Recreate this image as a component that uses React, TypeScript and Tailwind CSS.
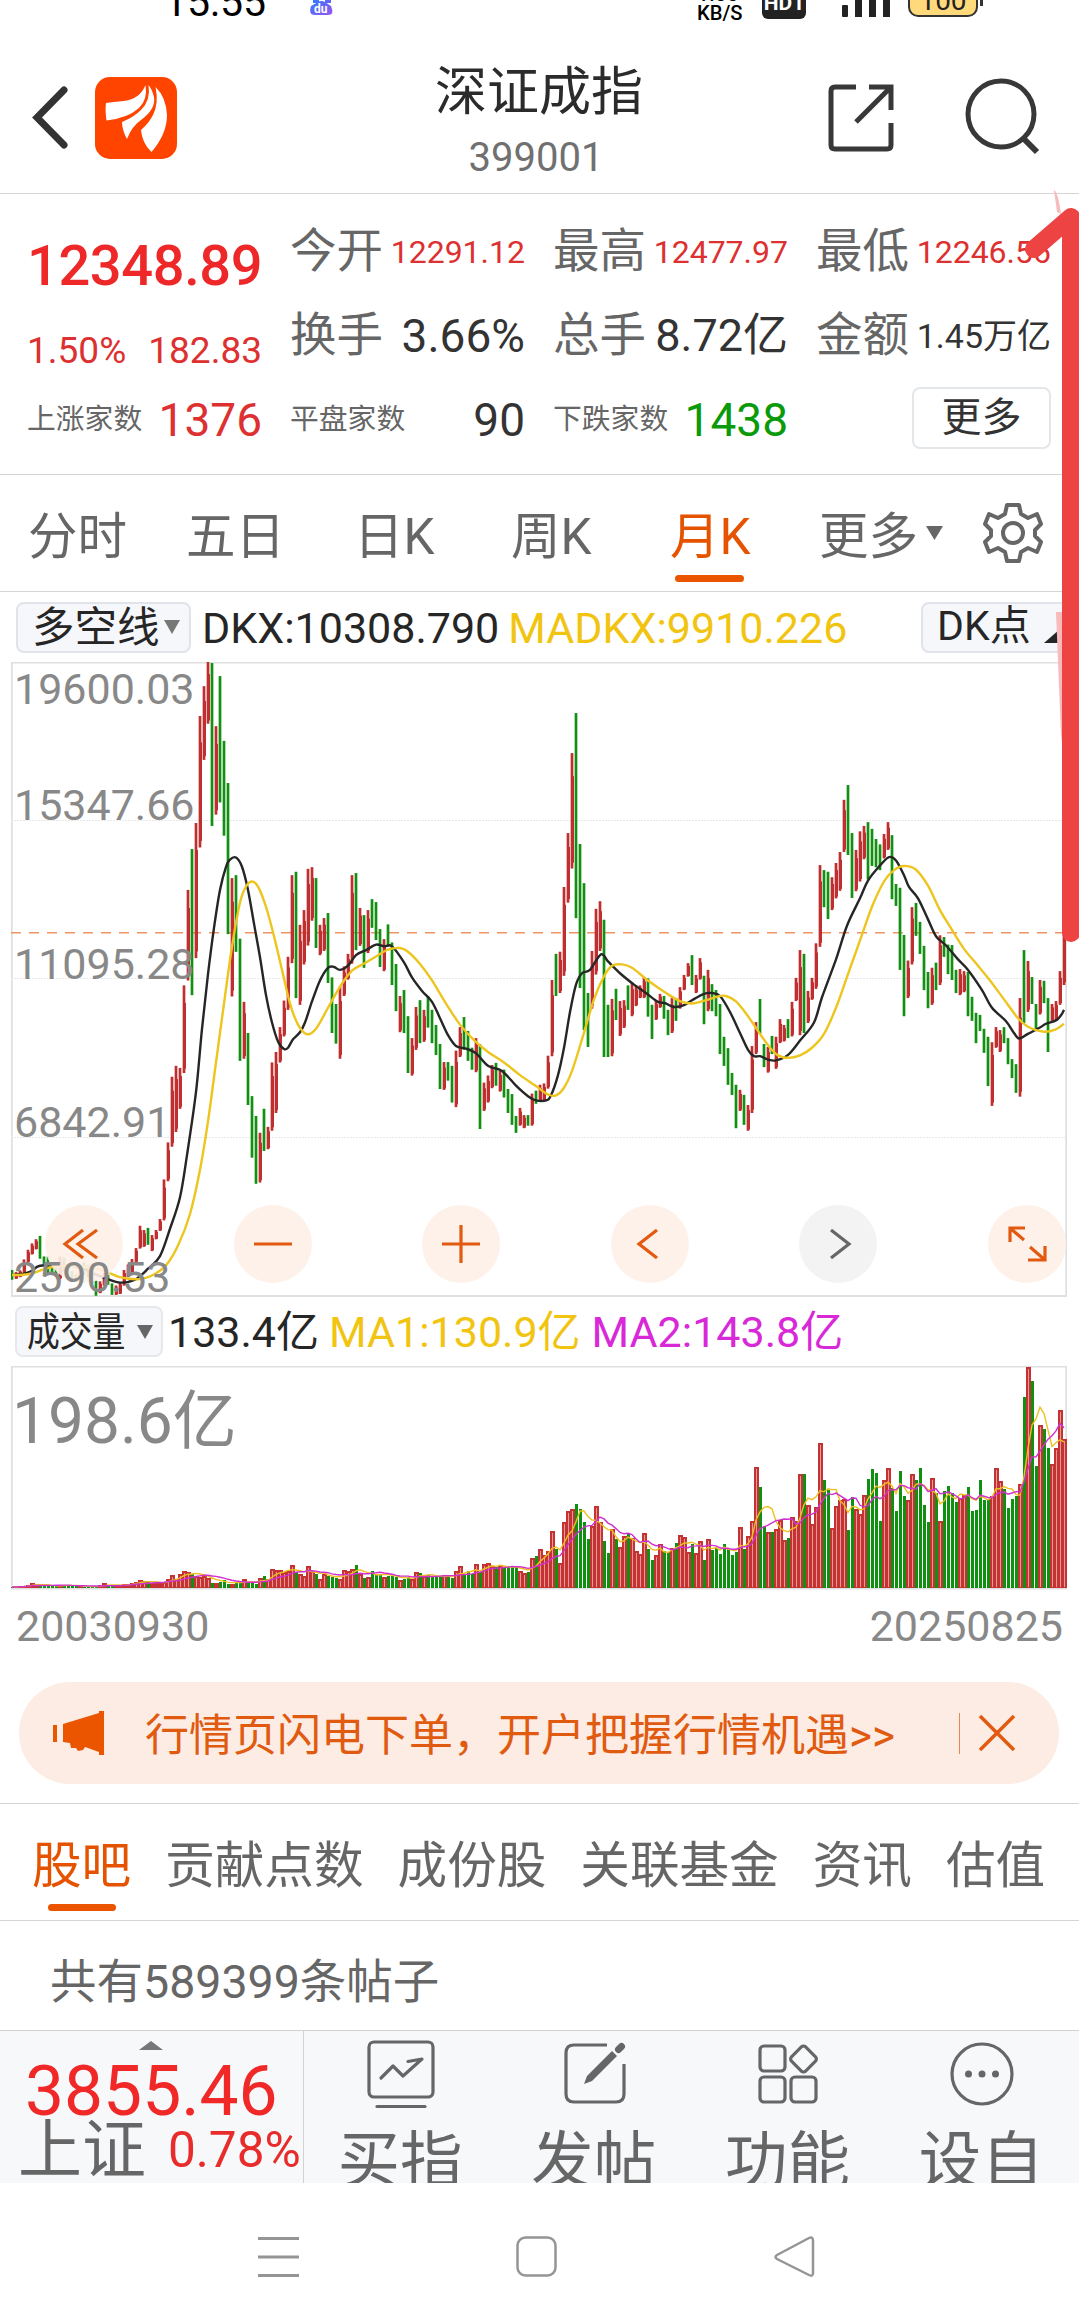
import React from 'react';
import clsx from 'clsx';

type Point = [number, number];

// Monthly candles: direction, then high / low as a distance from the top of the panel (0 - 1534 scale)
const CANDLES = `
g1473-1496 r1478-1494 r1474-1490 r1448-1482 r1425-1455 r1410-1436 r1400-1424 g1392-1446 g1441-1462 g1441-1480
g1460-1485 g1462-1488 r1441-1495 g1444-1478 g1465-1490 g1476-1494 g1484-1500 r1466-1500 g1455-1484 g1462-1490
g1475-1503 g1498-1534 r1500-1528 r1480-1510 g1485-1508 g1505-1532 r1510-1532 r1502-1530 r1473-1510 r1460-1490
r1447-1482 r1421-1455 r1368-1422 r1378-1418 g1373-1413 r1390-1428 r1378-1400 r1352-1380 r1258-1355 r1170-1262
r1014-1180 r988-1145 r993-1090 r797-1005 r570-785 g473-820 r411-732 r157-469 r86-261 r28-175
g31-418 r181-391 g62-362 g216-441 g316-675 r542-823 g535-717 g686-976 r836-971 g910-1081
g1060-1206 g1107-1268 r1147-1265 g1090-1190 r1133-1186 r980-1142 r955-1100 r896-980 r833-918 r729-855
r535-744 g527-827 r653-843 r618-747 r520-702 r516-643 g542-708 r653-725 r637-715 g625-791
g778-910 g841-935 r800-971 r752-822 r722-783 r535-745 g530-713 r613-703 g630-755 r618-720
g592-660 g599-689 g663-753 r687-763 g652-705 g695-796 g746-858 r822-908 g808-910 g870-1005
r922-1011 r848-950 g832-934 r855-931 g822-897 g855-934 g891-962 g936-1043 r979-1045 g979-1023
g988-1075 r952-1086 r896-967 g872-950 g905-976 g945-997 r922-1003 g937-1138 r1028-1095 r1011-1075
r986-1041 g981-1035 r1000-1049 g997-1063 g1043-1100 g1055-1128 g1107-1147 r1088-1130 r1105-1136 g1105-1130
r1054-1130 g1047-1078 r1033-1073 r1030-1073 r964-1042 r784-965 g722-822 r717-815 r563-774 r435-600
r245-519 g150-637 g461-803 g554-903 g815-943 r715-852 r615-771 r597-715 g641-967 g843-967
r829-965 g805-879 r834-917 r832-898 g797-855 r790-870 r797-846 r797-827 r778-827 g780-871
g843-924 r832-879 r817-850 g822-876 g855-915 r827-910 g827-881 r801-852 r772-808 r744-776
g725-796 r772-815 r732-783 g774-889 r760-858 g794-858 g808-870 g841-960 g919-988 g946-1033
g1005-1057 g1033-1136 r1045-1095 g1057-1128 r1081-1142 r941-1100 r884-960 g829-912 g936-991 r943-1004
g917-960 r919-995 r877-934 r891-930 g877-922 r836-918 r779-834 r713-915 g722-910 r810-886
r779-831 r697-805 r511-705 g523-611 g527-639 r540-618 r506-590 r480-572 r356-480 g321-487
g435-589 r475-573 r431-550 r418-497 g409-545 g425-513 g449-516 g462-523 r437-495 r409-475
g440-592 g556-608 g565-760 g677-870 r738-827 r611-747 g601-679 g646-722 g703-808 g765-851
r755-843 g743-808 r678-796 g682-729 g700-770 g701-784 g760-815 r758-820 r763-813 g765-870
g824-881 g862-934 g867-905 g900-957 g919-1036 r932-1083 r896-945 r903-955 g896-934 g922-984
g972-1017 g984-1052 r827-1061 g713-886 r739-860 g777-841 g841-900 r784-866 g786-839 g827-955
r841-881 r834-881 r763-843 r660-796`
  .trim()
  .split(/\s+/)
  .map((s) => {
    const [high, low] = s.slice(1).split('-').map(Number);
    return { up: s[0] === 'r', high, low };
  });

const VOLUMES = `
1 1 2 2 3 5 4 3 2 2 2 2 3 3 3 2 2 2 1 1 1 2 3 5 3 2 2 3 4 4 5 6 8 7 6 5 5 5 6 9
13 9 14 17 16 14 12 11 12 10 5 5 6 8 4 4 5 6 9 6 5 4 10 12 9 19 18 18 16 17
23 16 14 12 22 17 14 9 14 12 11 10 9 18 17 19 23 14 10 11 17 14 14 11 12 12 11 8 9 11
9 16 15 12 13 11 11 12 13 11 10 17 22 14 17 14 24 16 24 25 22 21 22 20 21 21 21 17 15 16
30 32 39 33 37 57 39 25 66 77 79 84 79 66 49 62 82 66 47 35 59 49 41 52 54 50 37 34 55 39
28 33 44 37 36 40 45 53 51 36 44 35 47 28 49 38 40 34 44 39 33 36 61 39 52 67 121 101 62 56
56 59 68 48 50 71 67 114 114 83 64 81 145 108 98 60 82 88 89 58 91 79 74 93 109 119 115 67 108 120
100 77 117 92 88 114 108 120 83 66 110 95 67 97 102 95 86 90 93 101 77 78 108 88 89 92 120 107 99 80
89 92 104 191 221 207 122 163 159 140 124 140 178 149`
  .trim()
  .split(/\s+/)
  .map(Number);

const DKX: Point[] = [
  [12, 1485], [24, 1482], [32, 1475], [40, 1463], [64, 1462], [84, 1470], [92, 1480], [107, 1494], [120, 1503],
  [135, 1496], [148, 1470], [160, 1440], [170, 1375], [180, 1300], [187, 1200], [196, 1050], [202, 900], [208, 770],
  [214, 660], [220, 570], [226, 515], [230, 498], [236, 493], [242, 515], [248, 570], [254, 650], [260, 730],
  [266, 820], [272, 885], [278, 930], [284, 948], [288, 945], [293, 925], [300, 908], [305, 885], [312, 835],
  [320, 785], [328, 755], [334, 753], [340, 760], [348, 750], [356, 725], [366, 713], [376, 700], [384, 704],
  [392, 704], [404, 742], [412, 778], [422, 810], [432, 836], [440, 875], [448, 915], [456, 941], [466, 947],
  [476, 958], [488, 988], [502, 1000], [516, 1035], [528, 1060], [536, 1070], [546, 1070], [551, 1058], [558, 1010],
  [564, 945], [570, 860], [576, 795], [582, 768], [590, 760], [601, 723], [608, 740], [620, 768], [634, 795],
  [646, 815], [658, 836], [665, 839], [674, 848], [684, 844], [692, 832], [704, 817], [712, 815], [720, 822],
  [730, 860], [740, 910], [748, 950], [754, 965], [760, 965], [768, 973], [776, 975], [788, 962], [800, 928],
  [814, 885], [822, 825], [836, 735], [847, 655], [860, 590], [868, 548], [880, 512], [889, 492], [896, 500],
  [904, 535], [909, 563], [918, 590], [928, 640], [936, 680], [946, 702], [958, 735], [968, 760], [982, 808],
  [992, 850], [1006, 882], [1014, 910], [1019, 923], [1028, 912], [1040, 897], [1046, 888], [1056, 880], [1061, 868],
  [1064, 855],
];

const MADKX: Point[] = [
  [12, 1485], [28, 1483], [46, 1470], [60, 1463], [76, 1464], [92, 1468], [104, 1475], [120, 1490], [138, 1495],
  [152, 1486], [166, 1462], [178, 1415], [190, 1340], [200, 1235], [208, 1120], [216, 980], [224, 840], [232, 705],
  [240, 600], [246, 562], [252, 550], [258, 562], [266, 610], [274, 680], [282, 760], [290, 840], [298, 890],
  [307, 913], [316, 900], [328, 850], [340, 800], [352, 762], [364, 745], [376, 728], [388, 712], [400, 708],
  [408, 717], [420, 746], [432, 785], [446, 840], [460, 890], [474, 927], [488, 955], [504, 980], [520, 1010],
  [536, 1036], [548, 1056], [556, 1058], [564, 1040], [572, 1000], [582, 925], [594, 830], [604, 775], [612, 750],
  [622, 747], [632, 755], [648, 785], [668, 818], [680, 834], [692, 840], [706, 832], [718, 823], [726, 822],
  [736, 835], [748, 870], [760, 912], [770, 945], [778, 963], [788, 969], [800, 963], [812, 945], [824, 912],
  [836, 850], [848, 770], [860, 690], [872, 610], [884, 550], [894, 523], [904, 513], [916, 522], [928, 560],
  [940, 618], [952, 665], [964, 710], [978, 750], [990, 785], [1004, 830], [1018, 875], [1028, 895], [1044, 907],
  [1056, 901], [1064, 888],
];

const priceY = (v: number) => v / 2.3758 - 12;
const barX = (i: number) => 1 + i * 4;

// Catmull-Rom spline through the points
function smooth(points: Point[]) {
  const p = points.map(([x, v]) => [x - 11, priceY(v)]);
  let d = `M${p[0][0]} ${p[0][1]}`;
  for (let i = 0; i < p.length - 1; i++) {
    const a = p[Math.max(i - 1, 0)];
    const b = p[i];
    const c = p[i + 1];
    const e = p[Math.min(i + 2, p.length - 1)];
    d += `C${b[0] + (c[0] - a[0]) / 6} ${b[1] + (c[1] - a[1]) / 6} ${c[0] - (e[0] - b[0]) / 6} ${c[1] - (e[1] - b[1]) / 6} ${c[0]} ${c[1]}`;
  }
  return d;
}

function movingAverage(n: number) {
  return VOLUMES.map((_, i) => {
    const part = VOLUMES.slice(Math.max(0, i - n + 1), i + 1);
    const avg = part.reduce((s, v) => s + v, 0) / part.length;
    return `${barX(i)},${222 - avg}`;
  }).join(' ');
}

function StatusBar() {
  return (
    <div className="flex h-[30px] items-start overflow-hidden text-black">
      <span className="-mt-[18px] ml-[164px] w-[144px] text-[41px] leading-none">15:55</span>
      <svg width="28" height="16" viewBox="0 0 28 16">
        <defs>
          <linearGradient id="paw" x1="0" y1="0" x2="1" y2="1">
            <stop offset="0" stopColor="#2b7bff" />
            <stop offset="1" stopColor="#9a55f0" />
          </linearGradient>
        </defs>
        <path d="M5 0h6v3H5zM17 0h6v3h-6zM10 2Q13 0 17 2L23 6Q27 15 20 15H7Q0 15 3 6Z" fill="url(#paw)" />
        <text x="6" y="12.500" fontSize="12" fontWeight="700" fill="#fff">du</text>
      </svg>
      <div className="-mt-[15px] ml-[361px] w-[65px] text-[21px] leading-[19px] font-medium">
        <div>1.00</div>
        <div className="origin-left scale-x-[0.96]">KB/S</div>
      </div>
      <div className="-mt-[12px] h-[31px] w-[44px] rounded-[6px] bg-[#222] pt-[5px] text-center text-[21px] leading-[20px] font-bold text-white">
        HD1
      </div>
      <svg className="ml-[36px]" width="50" height="18" viewBox="0 0 50 18" fill="#222">
        <rect x="0" y="5" width="6" height="12" rx="1" />
        <rect x="13" y="0" width="7" height="17" />
        <rect x="27" y="0" width="7" height="17" />
        <rect x="41" y="0" width="7" height="17" />
      </svg>
      <div className="-mt-[18px] ml-[16px] h-[35px] w-[70px] rounded-[10px] border-2 border-[#333] bg-[#ffd97a] text-center text-[28px] leading-[34px] text-[#222]">
        100
      </div>
      <div className="ml-[2px] h-[6px] w-[3px] bg-[#333]" />
    </div>
  );
}

function Header() {
  return (
    <header className="flex h-[164px] items-start border-b border-[#d4d4d4]">
      <svg className="mt-[54px] ml-[30px]" width="42" height="68" viewBox="0 0 42 68" fill="none" stroke="#333" strokeWidth="7">
        <path d="M34 6 7 33.500 34 61" strokeLinejoin="miter" strokeLinecap="round" />
      </svg>
      <svg className="mt-[47px] ml-[23px]" width="82" height="82" viewBox="0 0 82 82">
        <rect width="82" height="82" rx="15" fill="#ff4400" />
        <g fill="#fff">
          <path d="M50.500 8Q45 22 29 24Q18 25 11 26Q10 33 11.500 43.500Q33 41 44 31Q53 22 50.500 8Z" />
          <path d="M53.500 8Q56 23 46 33Q39 40 27 45Q27 53 32 62Q37 49 46 43Q61 32 59 20Q57 12 53.500 8Z" />
          <path d="M60.500 10Q64 26 58 38Q54 46 46 53Q47 66 56.500 75Q72 57 72 38Q71 20 60.500 10Z" />
        </g>
      </svg>
      <div className="mt-[31px] ml-[212px] w-[300px] text-center">
        <h1 className="text-[52px] leading-[64px] text-[#2b2b2b]">深证成指</h1>
        <p className="mt-[13px] mr-[6px] text-[40px] leading-[40px] text-[#707070]">399001</p>
      </div>
      <svg className="mt-[52px] ml-auto" width="70" height="72" viewBox="0 0 70 72" fill="none" stroke="#383838" strokeWidth="5">
        <path d="M29 5H8Q4 5 4 9V63Q4 67 8 67H60Q64 67 64 63V41M42 5H64V28M64 5 29 40" />
      </svg>
      <svg className="mt-[48px] mr-[36px] ml-[66px]" width="80" height="80" viewBox="0 0 80 80" fill="none" stroke="#383838" strokeWidth="5">
        <circle cx="38" cy="36" r="33" />
        <path d="M60 60 74 74" strokeWidth="6" />
      </svg>
    </header>
  );
}

function Quote({ label, value, labelClass, valueClass }: { label: string; value: string; labelClass: string; valueClass: string }) {
  return (
    <div className="flex h-[84px] items-center justify-between whitespace-nowrap">
      <span className={clsx('text-[#666]', labelClass)}>{label}</span>
      <span className={valueClass}>{value}</span>
    </div>
  );
}

function Summary() {
  return (
    <section className="grid h-[281px] grid-cols-[235px_235px_235px_235px] gap-x-[28px] border-b border-[#d4d4d4] pt-[16px] pl-[27px]">
      <div className="pt-[20px]">
        <div className="h-[72px] text-[56px] leading-[72px] font-medium tracking-[-0.4px] text-[#ee2828]">12348.89</div>
        <div className="mt-[27px] flex justify-between text-[37px] leading-[44px] text-[#dd3030]">
          <span>1.50%</span>
          <span>182.83</span>
        </div>
        <div className="mt-[5px]">
          <Quote label="上涨家数" value="1376" labelClass="text-[28.8px]" valueClass="text-[46px] text-[#dd3030]" />
        </div>
      </div>
      <div>
        <Quote label="今开" value="12291.12" labelClass="text-[46.5px]" valueClass="text-[32px] text-[#dd3030]" />
        <Quote label="换手" value="3.66%" labelClass="text-[46.5px]" valueClass="text-[46px] text-[#333]" />
        <Quote label="平盘家数" value="90" labelClass="text-[28.8px]" valueClass="text-[46px] text-[#333]" />
      </div>
      <div>
        <Quote label="最高" value="12477.97" labelClass="text-[46.5px]" valueClass="text-[32px] text-[#dd3030]" />
        <Quote label="总手" value="8.72亿" labelClass="text-[46.5px]" valueClass="text-[45px] text-[#333]" />
        <Quote label="下跌家数" value="1438" labelClass="text-[28.8px]" valueClass="text-[46px] text-[#0a9a0a]" />
      </div>
      <div>
        <Quote label="最低" value="12246.56" labelClass="text-[46.5px]" valueClass="text-[32px] text-[#dd3030]" />
        <Quote label="金额" value="1.45万亿" labelClass="text-[46.5px]" valueClass="text-[34px] text-[#333]" />
        <button className="mt-[9px] ml-auto block h-[62px] w-[139px] rounded-[8px] border-2 border-[#e4e7e9] text-[40px] leading-[58px] text-[#333]">
          更多
        </button>
      </div>
    </section>
  );
}

const PERIODS = [
  { name: '分时', className: 'w-[158px]' },
  { name: '五日', className: 'w-[168px]' },
  { name: '日K', className: 'w-[157px]' },
  { name: '周K', className: 'w-[159px]' },
  { name: '月K', className: 'w-[149px]', active: true },
];

function PeriodTabs() {
  return (
    <nav className="flex h-[117px] border-b border-[#d4d4d4] pl-[28px] text-[49.500px] leading-[124px] text-[#666]">
      {PERIODS.map((p) => (
        <div key={p.name} className={clsx('relative shrink-0', p.className, p.active && 'text-[#e65300]')}>
          {p.name}
          {p.active && <span className="absolute top-[100px] left-[5px] h-[7px] w-[69px] rounded-full bg-[#eb5500]" />}
        </div>
      ))}
      <div className="flex w-[164px] items-start">
        <span>更多</span>
        <svg className="mt-[51px] ml-[8px]" width="17" height="15" viewBox="0 0 17 15">
          <path d="M0 0H17L8.500 14Z" fill="#666" />
        </svg>
      </div>
      <svg className="mt-[27px]" width="60" height="62" viewBox="0 0 60 62" fill="none" stroke="#666" strokeWidth="4" strokeLinejoin="round">
        <path d="M24 3h12l2 9 7 4 9-4 4 10-6 6v6l6 6-4 10-9-4-7 4-2 9H24l-2-9-7-4-9 4-4-10 6-6v-6l-6-6 4-10 9 4 7-4Z" />
        <circle cx="30" cy="31" r="10" />
      </svg>
    </nav>
  );
}

function PriceChart() {
  const levels = [
    ['19600.03', 'top-[14px]'],
    ['15347.66', 'top-[130px]'],
    ['11095.28', 'top-[289px]'],
    ['6842.91', 'top-[447px]'],
    ['2590.53', 'top-[602px]'],
  ];
  const actions = [
    'M19 4 1 18 19 32M33 4 14 18 33 32',
    'M1 18H39',
    'M1 18H39M20 -1V37',
    'M27 4 9 18 27 32',
    'M13 4 31 18 13 32',
    'M3 16V2H18M3 2 17 14M38 20V34H21M38 34 23 21',
  ];
  return (
    <section className="relative ml-[11px] h-[635px] w-[1056px]">
      <svg width="1056" height="635" viewBox="0 0 1056 635" fill="none">
        <rect x="0.750" y="0.500" width="1054.500" height="633.500" stroke="#e0e0e0" strokeWidth="2" />
        {[158.5, 316.5, 475.5].map((y) => (
          <path key={y} d={`M0 ${y}H1055`} stroke="#e8e8e8" strokeDasharray="2 1" />
        ))}
        <path d="M0 270.750H1055" stroke="#ee9465" strokeWidth="1.700" strokeDasharray="10 8" />
        {CANDLES.map((c, i) => {
          const top = priceY(c.high);
          const height = priceY(c.low) - top;
          return (
            <g key={i} fill={c.up ? '#bf2f2f' : '#129012'}>
              <rect x={barX(i) - 2} y={top} width="4" height={height} opacity="0.35" />
              <rect x={barX(i) - 1} y={top} width="2" height={height} />
              {c.up && <rect x={barX(i) - 1} y={top + height * 0.2} width="3" height={height * 0.75} />}
            </g>
          );
        })}
        <path d={smooth(DKX)} stroke="#262626" strokeWidth="2.400" />
        <path d={smooth(MADKX)} stroke="#edc51e" strokeWidth="2.400" />
      </svg>
      <div className="absolute top-[543px] left-[34px] flex gap-[110.600px]">
        {actions.map((d, i) => (
          <button
            key={d}
            className={clsx('flex size-[78px] items-center justify-center rounded-full', i === 4 ? 'bg-[#f2f2f2]/90' : 'bg-[#feefe7]/90')}
          >
            <svg className="overflow-visible" width="40" height="36" viewBox="0 0 40 36" fill="none" stroke={i === 4 ? '#666' : '#e25a10'} strokeWidth="3.200">
              <path d={d} />
            </svg>
          </button>
        ))}
      </div>
      {levels.map(([text, top]) => (
        <span key={text} className={clsx('absolute left-[3px] text-[43px] leading-[26px] text-[#888]', top)}>
          {text}
        </span>
      ))}
    </section>
  );
}

function VolumeChart() {
  return (
    <section className="relative ml-[11px] h-[224px] w-[1056px]">
      <svg width="1056" height="224" viewBox="0 0 1056 224" fill="none">
        <rect x="0.750" y="0.500" width="1054.500" height="222" stroke="#e0e0e0" strokeWidth="2" />
        {VOLUMES.map((v, i) =>
          CANDLES[i].up ? (
            <g key={i}>
              <rect x={barX(i) - 2} y={222 - v} width="5" height={v} fill="#c53232" />
              {v > 5 && <rect x={barX(i)} y={224 - v} width="1" height={v - 3} fill="#e59a9a" />}
            </g>
          ) : (
            <rect key={i} x={barX(i) - 1} y={222 - v} width="3" height={v} fill="#109010" />
          ),
        )}
        <polyline points={movingAverage(5)} stroke="#edc022" strokeWidth="1.400" />
        <polyline points={movingAverage(10)} stroke="#d030d0" strokeWidth="1.400" />
      </svg>
      <span className="absolute top-[24px] left-[1px] text-[64px] leading-[64px] text-[#888]">198.6亿</span>
    </section>
  );
}

function Promo() {
  return (
    <div className="mt-[29px] ml-[19px] flex h-[102px] w-[1040px] items-center rounded-full bg-[#fdece3] text-[#e05a10]">
      <svg className="ml-[33px]" width="54" height="48" viewBox="0 0 54 48" fill="#eb5500">
        <path d="M1 16H5V33H1ZM11 15 47 4V2H52V46H47V43L33 38L31 41 26 42 24 39H19L18 34 11 33Z" />
      </svg>
      <span className="mt-[5px] ml-[39px] text-[44px] leading-[60px] whitespace-nowrap">行情页闪电下单，开户把握行情机遇&gt;&gt;</span>
      <span className="absolute left-[959px] h-[41px] w-px bg-[#e8884e]" />
      <svg className="absolute left-[978px]" width="38" height="38" viewBox="0 0 38 38" stroke="#e25a10" strokeWidth="3.500">
        <path d="M2 2 36 36M36 2 2 36" />
      </svg>
    </div>
  );
}

function ContentTabs() {
  return (
    <nav className="mt-[19px] flex h-[118px] gap-[34px] border-y border-[#d4d4d4] pl-[32px] text-[49.600px] leading-[124px] whitespace-nowrap text-[#666]">
      <div className="relative text-[#e65300]">
        股吧
        <span className="absolute top-[100px] left-[16px] h-[7px] w-[68px] rounded-full bg-[#eb5500]" />
      </div>
      {['贡献点数', '成份股', '关联基金', '资讯', '估值'].map((t) => (
        <div key={t}>{t}</div>
      ))}
    </nav>
  );
}

const TOOLS = [
  {
    name: '买指',
    icon: (
      <>
        <rect x="3" y="3" width="64" height="55" rx="5" />
        <path d="M11 67.500H59" />
        <path d="M15 39 27 27 37 37 56 20 42 22.500" strokeLinejoin="round" />
      </>
    ),
  },
  {
    name: '发帖',
    icon: (
      <>
        <path d="M47 6H14Q6 6 6 14V55Q6 63 14 63H56Q64 63 64 55V25" strokeLinecap="butt" />
        <path d="M24 45 27 37 52 12 57 17 32 42Z" fill="#666" stroke="none" />
        <path d="M58.500 10.500 61.500 7.500" strokeWidth="7" />
      </>
    ),
  },
  {
    name: '功能',
    icon: (
      <>
        <rect x="7" y="7" width="25" height="25" rx="4" />
        <rect x="7" y="38" width="25" height="25" rx="4" />
        <rect x="38" y="38" width="25" height="25" rx="4" />
        <rect x="40.500" y="10" width="20" height="20" rx="3" transform="rotate(45 50.500 20)" />
      </>
    ),
  },
  {
    name: '设自',
    icon: (
      <>
        <circle cx="35" cy="35" r="30" />
        <g fill="#666" stroke="none">
          <circle cx="21.500" cy="35" r="3.500" />
          <circle cx="35" cy="35" r="3.500" />
          <circle cx="48.500" cy="35" r="3.500" />
        </g>
      </>
    ),
  },
];

function BottomBar() {
  return (
    <footer className="flex h-[153px] overflow-hidden border-t border-[#d0d2d4] bg-[#f6f8fa]">
      <div className="w-[304px] shrink-0 border-r border-[#d0d2d4] whitespace-nowrap">
        <svg className="mt-[10px] ml-[139px]" width="24" height="9" viewBox="0 0 24 9">
          <path d="M12 0 24 9H0Z" fill="#777" />
        </svg>
        <div className="mt-[11px] pl-[25px] text-[69.500px] leading-[62px] text-[#f02828]">3855.46</div>
        <div className="flex items-center pl-[18px] leading-[56px]">
          <span className="text-[64px] text-[#666]">上证</span>
          <span className="-mt-[2px] ml-[22px] text-[49.500px] text-[#e82c2c]">0.78%</span>
        </div>
      </div>
      <div className="grid flex-1 grid-cols-4">
        {TOOLS.map((t) => (
          <div key={t.name} className="flex flex-col items-center">
            <svg className="mt-[8px] shrink-0" width="70" height="71" viewBox="0 0 70 71" fill="none" stroke="#666" strokeWidth="3.200" strokeLinecap="round">
              {t.icon}
            </svg>
            <span className="mt-[16px] mr-[2px] text-[62.500px] leading-[72px] text-[#666]">{t.name}</span>
          </div>
        ))}
      </div>
    </footer>
  );
}

function SystemNav() {
  return (
    <div className="flex h-[124px] items-start bg-white pt-[52px]">
      <svg className="ml-[258px]" width="41" height="44" viewBox="0 0 41 44" stroke="#959595" strokeWidth="3">
        <path d="M0 3.500H41M0 22H41M0 40.500H41" />
      </svg>
      <svg className="ml-[216px]" width="44" height="44" viewBox="0 0 44 44" fill="none" stroke="#959595" strokeWidth="2.500">
        <rect x="2.500" y="2.500" width="38" height="38" rx="8" />
      </svg>
      <svg className="ml-[214px]" width="44" height="44" viewBox="0 0 44 44" fill="none" stroke="#959595" strokeWidth="2.500" strokeLinejoin="round">
        <path d="M36 3Q40 1 40 6V38Q40 42 36 40L4 24Q1 22 4 20Z" />
      </svg>
    </div>
  );
}

export default function App() {
  return (
    <div className="relative h-[2307px] w-[1079px] overflow-hidden bg-white font-[Roboto,'Noto_Sans_CJK_SC',sans-serif]">
      <StatusBar />
      <Header />
      <Summary />
      <PeriodTabs />

      <div className="flex h-[70px] items-center text-[43px] whitespace-nowrap">
        <button className="ml-[16px] flex h-[51px] w-[175px] items-center rounded-[8px] border-2 border-[#e0e3e9] bg-[#f6f7fa] pl-[14px] text-[#262626]">
          <span className="mt-[2px] text-[42.500px]">多空线</span>
          <svg className="ml-[4px] shrink-0" width="16" height="15" viewBox="0 0 16 15">
            <path d="M0 0H16L8 14Z" fill="#777" />
          </svg>
        </button>
        <span className="mt-[2px] ml-[11px] text-[#262626]">DKX:10308.790</span>
        <span className="mt-[2px] ml-[9px] text-[#f2c412]">MADKX:9910.226</span>
        <button className="ml-auto flex h-[51px] w-[158px] items-center rounded-l-[8px] border-2 border-[#e0e3e9] bg-[#f6f7fa] pl-[14px] text-[41px] text-[#262626]">
          <span>DK点</span>
          <svg className="mt-[18px] ml-[13px]" width="16" height="14" viewBox="0 0 16 14">
            <path d="M16 0V14H0Z" fill="#262626" />
          </svg>
        </button>
      </div>
      <PriceChart />

      <div className="flex h-[69px] items-center text-[43px] whitespace-nowrap">
        <button className="ml-[15px] flex h-[51px] w-[148px] items-center rounded-[8px] border-2 border-[#e6e8ec] bg-[#f6f7fa] pl-[10px] text-[#262626]">
          <span className="mt-[2px] w-[110px] origin-left scale-x-[0.82] text-left text-[40px]">成交量</span>
          <svg className="shrink-0" width="16" height="14" viewBox="0 0 16 14">
            <path d="M0 0H16L8 14Z" fill="#666" />
          </svg>
        </button>
        <span className="mt-[1px] ml-[5px] text-[#262626]">133.4亿</span>
        <span className="mt-[1px] ml-[10px] text-[#f2c412]">MA1:130.9亿</span>
        <span className="mt-[1px] ml-[11px] text-[#d828d8]">MA2:143.8亿</span>
      </div>
      <VolumeChart />

      <div className="flex h-[63px] items-center justify-between pt-[10px] pr-[16px] pl-[16px] text-[43px] text-[#888]">
        <span>20030930</span>
        <span>20250825</span>
      </div>

      <Promo />
      <ContentTabs />
      <div className="h-[109px] pl-[50px] text-[46.500px] leading-[122px] text-[#666]">共有589399条帖子</div>
      <BottomBar />
      <SystemNav />

      {/* hand-drawn red arrow laid over the right edge */}
      <svg className="absolute top-0 left-0" width="1079" height="960" viewBox="0 0 1079 960" fill="none">
        <path d="M1054 190Q1058 192 1061 214L1057 212Z" fill="#f8baba" />
        <path d="M1056 612H1064V760L1061 735Z" fill="#f8baba" />
        <path d="M1034 249 1071 217V933" stroke="#ee4343" strokeWidth="18" strokeLinecap="round" strokeLinejoin="round" />
      </svg>
    </div>
  );
}
